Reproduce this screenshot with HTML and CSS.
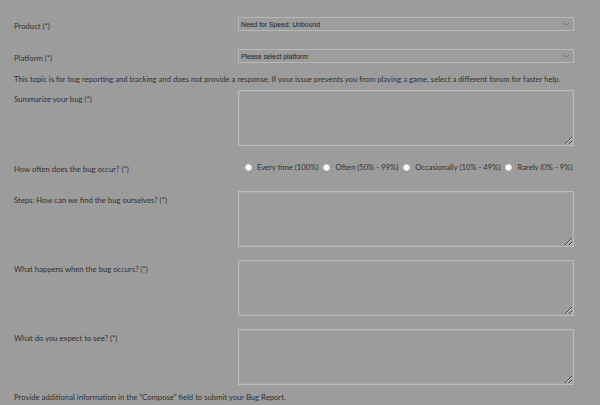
FILE: index.html
```html
<!DOCTYPE html>
<html lang="en">
<head>
  <meta charset="UTF-8">
  <title>Bug Report</title>
  <meta name="viewport" content="width=device-width, initial-scale=1.0">
  <link rel="stylesheet" href="styles.css">
</head>
<body>
  <form class="bug-form">
    <div class="row gap-lg">
      <label class="label">Product (*)</label>
      <div class="select">
        <select><option>Need for Speed: Unbound</option></select>
        <svg class="chevron" width="7" height="5" viewBox="0 0 7 5"><path d="M1 1 L3.5 3.5 L6 1" fill="none" stroke="#707070" stroke-width="1"/></svg>
      </div>
    </div>

    <div class="row">
      <label class="label">Platform (*)</label>
      <div class="select">
        <select><option>Please select platform</option></select>
        <svg class="chevron" width="7" height="5" viewBox="0 0 7 5"><path d="M1 1 L3.5 3.5 L6 1" fill="none" stroke="#707070" stroke-width="1"/></svg>
      </div>
    </div>

    <p class="note">This topic is for bug reporting and tracking and does not provide a response. If your issue prevents you from playing a game, select a different forum for faster help.</p>

    <div class="row gap-md">
      <label class="label">Summarize your bug (*)</label>
      <textarea></textarea>
    </div>

    <div class="row radio-row">
      <label class="label">How often does the bug occur? (*)</label>
      <div class="radios">
        <label class="radio"><input type="radio" name="freq"> Every time (100%)</label>
        <label class="radio"><input type="radio" name="freq"> Often (50% - 99%)</label>
        <label class="radio"><input type="radio" name="freq"> Occasionally (10% - 49%)</label>
        <label class="radio"><input type="radio" name="freq"> Rarely (0% - 9%)</label>
      </div>
    </div>

    <div class="row gap-sm">
      <label class="label">Steps: How can we find the bug ourselves? (*)</label>
      <textarea></textarea>
    </div>

    <div class="row gap-sm">
      <label class="label">What happens when the bug occurs? (*)</label>
      <textarea></textarea>
    </div>

    <div class="row">
      <label class="label">What do you expect to see? (*)</label>
      <textarea></textarea>
    </div>

    <p class="note last">Provide additional information in the "Compose" field to submit your Bug Report.</p>
  </form>
</body>
</html>
```

FILE: styles.css
```css
* { box-sizing: border-box; margin: 0; padding: 0; }

body {
  background: #9c9c9c;
  font-family: Lato, "Open Sans", sans-serif;
  font-size: 7.7px;
  color: #313131;
  overflow: hidden;
}

.bug-form {
  padding: 17px 0 0 14px;
}

.row {
  display: grid;
  grid-template-columns: 224px 336px;
  align-items: start;
}

.gap-lg { margin-bottom: 18px; }
.gap-md { margin-bottom: 15px; }
.gap-sm { margin-bottom: 13px; }

.label {
  padding-top: 5px;
  line-height: 9px;
}

.select {
  position: relative;
  height: 14px;
  border: 1px solid #b8b8b8;
}

.select select {
  appearance: none;
  display: block;
  width: 100%;
  height: 100%;
  border: none;
  background: transparent;
  font-family: "Liberation Sans", Arial, sans-serif;
  font-size: 6.8px;
  color: #1e1e1e;
  padding-left: 2px;
  outline: none;
}

.chevron {
  position: absolute;
  right: 3px;
  top: 4px;
}

.note {
  white-space: nowrap;
  line-height: 11px;
  margin: 11px 0 5px;
}

.note.last {
  margin: 6px 0 0;
  line-height: 12px;
}

textarea {
  display: block;
  height: 56px;
  border: 1px solid #b9b9b9;
  box-shadow: inset 0 0 0 1px #a4a4a4;
  background: #9c9c9c;
  resize: vertical;
  outline: none;
}

.radio-row { margin-bottom: 17px; }
.radio-row .label { padding-top: 4px; }

.radios {
  display: flex;
  align-items: center;
  height: 12px;
  margin-left: 7px;
}

.radio {
  display: flex;
  align-items: center;
  line-height: 12px;
  margin-right: 5px;
  white-space: nowrap;
}

.radio input {
  appearance: none;
  width: 7px;
  height: 7px;
  border-radius: 50%;
  background: #fbfbfb;
  border: 1px solid #e2e2e2;
  margin-right: 5px;
}
```
